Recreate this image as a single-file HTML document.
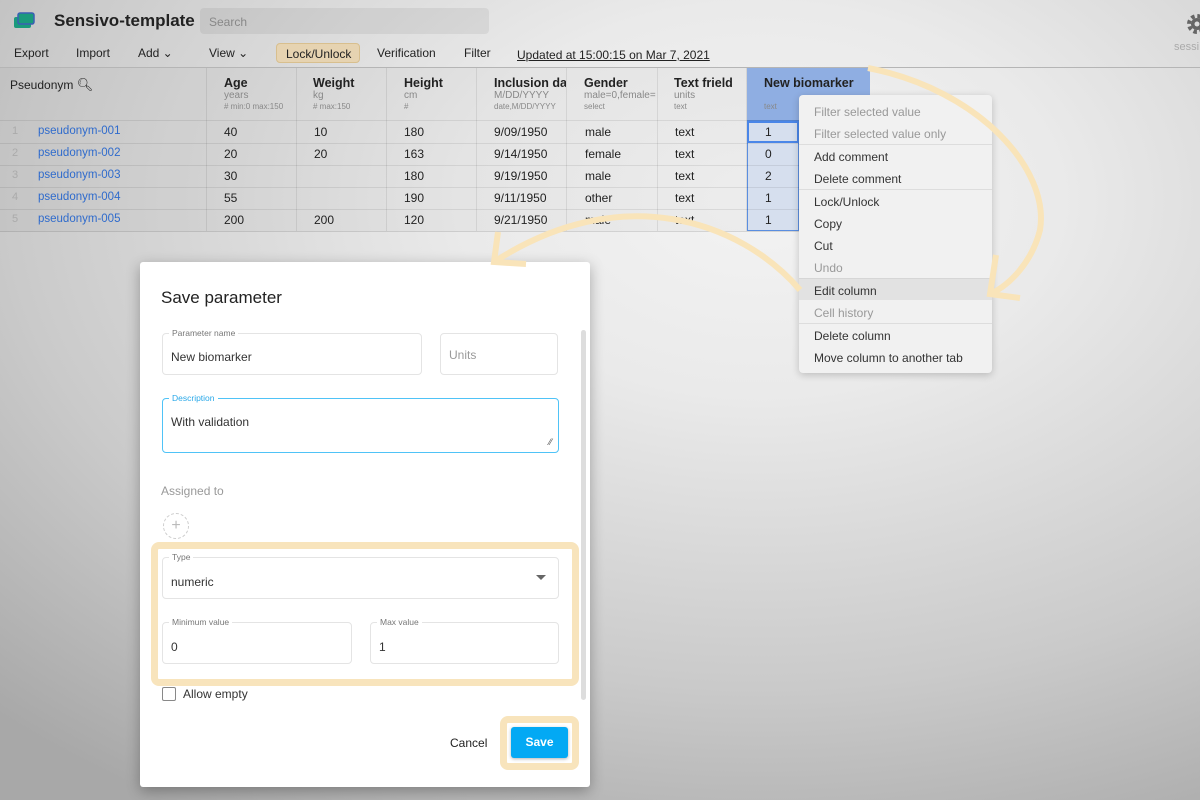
<!DOCTYPE html>
<html><head><meta charset="utf-8"><style>
*{box-sizing:border-box;margin:0;padding:0}
body{width:1200px;height:800px;overflow:hidden;font-family:"Liberation Sans",sans-serif;position:relative;
background:radial-gradient(1000px 650px at 760px 200px,#f3f3f3 0%,#eaeaea 30%,#cacaca 75%,#a8a8a8 110%)}
.a{position:absolute}
.t{font-size:12px;color:#222;white-space:nowrap}
.hd{font-weight:bold;font-size:12.5px;color:#222}
.sub{font-size:10px;color:#888;line-height:12px}
.sub2{font-size:8px;color:#888}
.vl{position:absolute;top:68px;height:163px;width:1px;background:rgba(0,0,0,.08)}
.hl{position:absolute;left:0;width:870px;height:1px;background:rgba(0,0,0,.08)}
.mi{position:absolute;left:15px;font-size:12px;color:#333}
.mg{color:#999}
.fld{position:absolute;border:1px solid #e4e4e4;border-radius:4px}
.lbl{position:absolute;top:-6px;left:6px;background:#fff;padding:0 3px;font-size:8.5px;color:#777}
.val{position:absolute;left:8px;font-size:12px;color:#333}
</style></head><body>
<svg class="a" style="left:12px;top:12px" width="26" height="18"><rect x="2" y="5" width="17" height="11" rx="2" fill="#1a9a7c"/><rect x="6" y="1" width="16" height="11" rx="2" fill="#1a9a7c" stroke="#3a5fb4" stroke-width="1.5"/></svg>
<div class="a" style="left:54px;top:11px;font-size:17px;font-weight:bold;color:#222">Sensivo-template</div>
<div class="a" style="left:200px;top:8px;width:289px;height:26px;background:rgba(0,0,0,.06);border-radius:4px;font-size:12px;color:#888;padding:7px 9px">Search</div>
<div class="a t" style="left:14px;top:46px">Export</div>
<div class="a t" style="left:76px;top:46px">Import</div>
<div class="a t" style="left:138px;top:46px">Add ⌄</div>
<div class="a t" style="left:209px;top:46px">View ⌄</div>
<div class="a t" style="left:276px;top:43px;width:84px;height:20px;background:#e6d3b1;border:1px solid #d8bf8e;border-radius:4px;padding:3px 0 0 9px">Lock/Unlock</div>
<div class="a t" style="left:377px;top:46px">Verification</div>
<div class="a t" style="left:464px;top:46px">Filter</div>
<div class="a t" style="left:517px;top:48px;text-decoration:underline">Updated at 15:00:15 on Mar 7, 2021</div>
<svg class="a" style="left:1186px;top:13px" width="14" height="22" viewBox="0 0 14 22"><circle cx="11" cy="11" r="8" fill="none" stroke="#666" stroke-width="4" stroke-dasharray="3.5 2.8"/><circle cx="11" cy="11" r="6" fill="#666"/><circle cx="11" cy="11" r="2.5" fill="#ddd"/></svg>
<div class="a" style="left:1174px;top:41px;font-size:11px;color:#aaa">sessi</div>
<div class="a" style="left:0;top:67px;width:1200px;height:1px;background:#b5b5b5"></div>
<div class="a" style="left:0;top:68px;width:870px;height:163px;background:rgba(0,0,0,.025)"></div>
<div class="a" style="left:747px;top:68px;width:123px;height:52px;background:#8faee2"></div>
<div class="a" style="left:747px;top:120px;width:52px;height:111px;background:#d6dfee;border:1.5px solid #5a8ee0"></div>
<div class="a" style="left:747px;top:121px;width:52px;height:22px;border:2px solid #4a86e8"></div>
<div class="vl" style="left:206px"></div><div class="vl" style="left:296px"></div><div class="vl" style="left:386px"></div><div class="vl" style="left:476px"></div><div class="vl" style="left:566px"></div><div class="vl" style="left:657px"></div><div class="vl" style="left:746px"></div>
<div class="hl" style="top:120px"></div><div class="hl" style="top:143px"></div><div class="hl" style="top:165px"></div><div class="hl" style="top:187px"></div><div class="hl" style="top:209px"></div><div class="hl" style="top:231px;background:rgba(0,0,0,.12)"></div>
<div class="a t" style="left:10px;top:77px">Pseudonym <span style="font-size:13px">&#x1F50D;&#xFE0E;</span></div>
<div class="a" style="left:224px;top:76px"><div class="hd">Age</div><div class="sub">years</div><div class="sub2">#  min:0 max:150</div></div>
<div class="a" style="left:313px;top:76px"><div class="hd">Weight</div><div class="sub">kg</div><div class="sub2"># max:150</div></div>
<div class="a" style="left:404px;top:76px"><div class="hd">Height</div><div class="sub">cm</div><div class="sub2">#</div></div>
<div class="a" style="left:494px;top:76px;width:72px;overflow:hidden;white-space:nowrap"><div class="hd">Inclusion dat</div><div class="sub">M/DD/YYYY</div><div class="sub2">date,M/DD/YYYY</div></div>
<div class="a" style="left:584px;top:76px;width:72px;overflow:hidden;white-space:nowrap"><div class="hd">Gender</div><div class="sub">male=0,female=</div><div class="sub2">select</div></div>
<div class="a" style="left:674px;top:76px"><div class="hd">Text frield</div><div class="sub">units</div><div class="sub2">text</div></div>
<div class="a" style="left:764px;top:76px"><div class="hd">New biomarker</div><div class="sub">&nbsp;</div><div class="sub2">text</div></div>
<div class="a" style="left:0;top:125px;width:870px">
<div style="position:relative;height:22px"><span class="a t" style="left:12px;color:#aaa;font-size:11px">1</span><span class="a t" style="left:38px;color:#2f6bcc;font-size:11.5px">pseudonym-001</span><span class="a t" style="left:224px">40</span><span class="a t" style="left:314px">10</span><span class="a t" style="left:404px">180</span><span class="a t" style="left:494px">9/09/1950</span><span class="a t" style="left:585px">male</span><span class="a t" style="left:675px">text</span><span class="a t" style="left:765px">1</span></div>
<div style="position:relative;height:22px"><span class="a t" style="left:12px;color:#aaa;font-size:11px">2</span><span class="a t" style="left:38px;color:#2f6bcc;font-size:11.5px">pseudonym-002</span><span class="a t" style="left:224px">20</span><span class="a t" style="left:314px">20</span><span class="a t" style="left:404px">163</span><span class="a t" style="left:494px">9/14/1950</span><span class="a t" style="left:585px">female</span><span class="a t" style="left:675px">text</span><span class="a t" style="left:765px">0</span></div>
<div style="position:relative;height:22px"><span class="a t" style="left:12px;color:#aaa;font-size:11px">3</span><span class="a t" style="left:38px;color:#2f6bcc;font-size:11.5px">pseudonym-003</span><span class="a t" style="left:224px">30</span><span class="a t" style="left:404px">180</span><span class="a t" style="left:494px">9/19/1950</span><span class="a t" style="left:585px">male</span><span class="a t" style="left:675px">text</span><span class="a t" style="left:765px">2</span></div>
<div style="position:relative;height:22px"><span class="a t" style="left:12px;color:#aaa;font-size:11px">4</span><span class="a t" style="left:38px;color:#2f6bcc;font-size:11.5px">pseudonym-004</span><span class="a t" style="left:224px">55</span><span class="a t" style="left:404px">190</span><span class="a t" style="left:494px">9/11/1950</span><span class="a t" style="left:585px">other</span><span class="a t" style="left:675px">text</span><span class="a t" style="left:765px">1</span></div>
<div style="position:relative;height:22px"><span class="a t" style="left:12px;color:#aaa;font-size:11px">5</span><span class="a t" style="left:38px;color:#2f6bcc;font-size:11.5px">pseudonym-005</span><span class="a t" style="left:224px">200</span><span class="a t" style="left:314px">200</span><span class="a t" style="left:404px">120</span><span class="a t" style="left:494px">9/21/1950</span><span class="a t" style="left:585px">male</span><span class="a t" style="left:675px">text</span><span class="a t" style="left:765px">1</span></div>
</div>
<div class="a" style="left:799px;top:95px;width:193px;height:278px;background:#f1f1f1;border-radius:4px;box-shadow:0 2px 8px rgba(0,0,0,.2)">
<div class="mi mg" style="top:10px">Filter selected value</div>
<div class="mi mg" style="top:32px">Filter selected value only</div>
<div class="a" style="left:0;top:49px;width:193px;height:1px;background:#ddd"></div>
<div class="mi" style="top:55px">Add comment</div>
<div class="mi" style="top:77px">Delete comment</div>
<div class="a" style="left:0;top:94px;width:193px;height:1px;background:#ddd"></div>
<div class="mi" style="top:100px">Lock/Unlock</div>
<div class="mi" style="top:122px">Copy</div>
<div class="mi" style="top:144px">Cut</div>
<div class="mi mg" style="top:166px">Undo</div>
<div class="a" style="left:0;top:183px;width:193px;height:22px;background:#e2e2e2;border-top:1px solid #d6d6d6"></div>
<div class="mi" style="top:189px">Edit column</div>
<div class="mi mg" style="top:211px">Cell history</div>
<div class="a" style="left:0;top:228px;width:193px;height:1px;background:#ddd"></div>
<div class="mi" style="top:234px">Delete column</div>
<div class="mi" style="top:256px">Move column to another tab</div>
</div>
<div class="a" style="left:140px;top:262px;width:450px;height:525px;background:#fff;border-radius:3px;box-shadow:0 4px 14px rgba(0,0,0,.3)">
<div class="a" style="left:21px;top:26px;font-size:17px;color:#222">Save parameter</div>
<div class="a" style="left:441px;top:68px;width:5px;height:370px;background:#ddd;border-radius:3px"></div>
<div class="fld" style="left:22px;top:71px;width:260px;height:42px"><span class="lbl">Parameter name</span><span class="val" style="top:16px">New biomarker</span></div>
<div class="fld" style="left:300px;top:71px;width:118px;height:42px"><span class="val" style="top:14px;color:#999">Units</span></div>
<div class="fld" style="left:22px;top:136px;width:397px;height:55px;border-color:#4fc3f7"><span class="lbl" style="color:#29a8e8">Description</span><span class="val" style="top:16px">With validation</span><span class="a" style="right:6px;bottom:5px;font-size:9px;color:#555">⁄⁄</span></div>
<div class="a" style="left:21px;top:222px;font-size:12px;color:#999">Assigned to</div>
<div class="a" style="left:23px;top:251px;width:26px;height:26px;border:1px dashed #ccc;border-radius:50%;text-align:center;font-size:16px;line-height:23px;color:#bbb">+</div>
<div class="a" style="left:11px;top:280px;width:428px;height:144px;border:7px solid #f8e4bc;border-radius:8px"></div>
<div class="fld" style="left:22px;top:295px;width:397px;height:42px"><span class="lbl">Type</span><span class="val" style="top:17px">numeric</span><span class="a" style="right:12px;top:17px;width:0;height:0;border-left:5px solid transparent;border-right:5px solid transparent;border-top:5px solid #666"></span></div>
<div class="fld" style="left:22px;top:360px;width:190px;height:42px"><span class="lbl">Minimum value</span><span class="val" style="top:17px">0</span></div>
<div class="fld" style="left:230px;top:360px;width:189px;height:42px"><span class="lbl">Max value</span><span class="val" style="top:17px">1</span></div>
<div class="a" style="left:22px;top:425px;width:14px;height:14px;border:1.5px solid #888;border-radius:2px"></div>
<div class="a" style="left:43px;top:425px;font-size:12px;color:#333">Allow empty</div>
<div class="a" style="left:310px;top:474px;font-size:12px;color:#222">Cancel</div>
<div class="a" style="left:360px;top:454px;width:79px;height:54px;border:7px solid #f8e4bc;border-radius:8px"></div>
<div class="a" style="left:371px;top:465px;width:57px;height:31px;background:#03a9f4;border-radius:3px;box-shadow:0 1px 3px rgba(0,0,0,.3);color:#fff;font-weight:bold;font-size:12px;text-align:center;line-height:31px">Save</div>
</div>
<svg class="a" style="left:0;top:0" width="1200" height="800" fill="none" stroke="#f9e4b9" stroke-width="6" stroke-linecap="butt">
<path d="M868 68 C 980 90, 1050 170, 1040 230 C 1032 262, 1010 285, 990 294"/>
<path d="M996 255 L 990 294 L 1020 298"/>
<path d="M800 290 C 740 220, 620 180, 494 262"/>
<path d="M498 232 L 494 262 L 526 264"/>
</svg>
</body></html>
